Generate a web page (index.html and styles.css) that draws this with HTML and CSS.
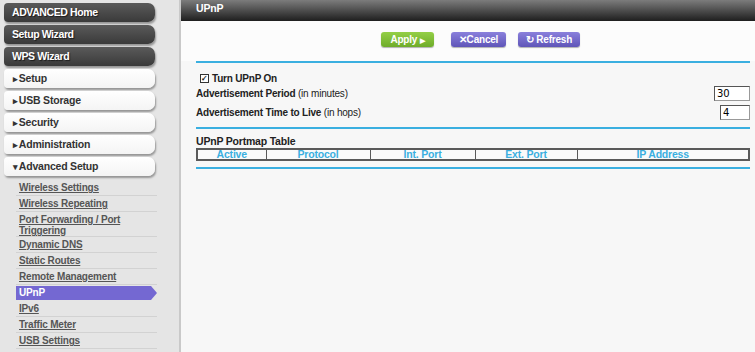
FILE: index.html
```html
<!DOCTYPE html>
<html lang="en">
<head>
  <meta charset="UTF-8">
  <title>UPnP</title>
  <link rel="stylesheet" href="styles.css">
</head>
<body>
  <div class="sidebar">
    <div class="nav-btn dark">ADVANCED Home</div>
    <div class="nav-btn dark">Setup Wizard</div>
    <div class="nav-btn dark">WPS Wizard</div>
    <div class="nav-btn light"><span class="tri">&#9656;</span>Setup</div>
    <div class="nav-btn light"><span class="tri">&#9656;</span>USB Storage</div>
    <div class="nav-btn light"><span class="tri">&#9656;</span>Security</div>
    <div class="nav-btn light"><span class="tri">&#9656;</span>Administration</div>
    <div class="nav-btn light"><span class="tri">&#9662;</span>Advanced Setup</div>
    <ul class="sub-links">
      <li><a>Wireless Settings</a></li>
      <li><a>Wireless Repeating</a></li>
      <li class="two"><a>Port Forwarding / Port Triggering</a></li>
      <li><a>Dynamic DNS</a></li>
      <li><a>Static Routes</a></li>
      <li><a>Remote Management</a></li>
      <li class="current"><a>UPnP</a></li>
      <li><a>IPv6</a></li>
      <li><a>Traffic Meter</a></li>
      <li><a>USB Settings</a></li>
    </ul>
  </div>

  <div class="main">
    <div class="page-title">UPnP</div>
    <div class="action-bar">
      <button class="btn green">Apply <span class="arrow">&#9654;</span></button>
      <button class="btn purple cancel"><span class="x">&#10005;</span>Cancel</button>
      <button class="btn purple refresh"><span class="spin">&#8635;</span> Refresh</button>
    </div>
    <div class="content">
      <div class="rule"></div>
      <div class="form">
        <label class="check-row"><span class="box">&#10003;</span>Turn UPnP On</label>
        <div class="field-row">
          <span><b>Advertisement Period</b> (in minutes)</span>
          <input type="text" class="num wide" value="30">
        </div>
        <div class="field-row">
          <span><b>Advertisement Time to Live</b> (in hops)</span>
          <input type="text" class="num" value="4">
        </div>
      </div>
      <div class="rule"></div>
      <h4 class="table-title">UPnP Portmap Table</h4>
      <table class="portmap">
        <tr>
          <th class="c-active">Active</th>
          <th class="c-proto">Protocol</th>
          <th class="c-int">Int. Port</th>
          <th class="c-ext">Ext. Port</th>
          <th>IP Address</th>
        </tr>
      </table>
      <div class="rule bottom"></div>
    </div>
  </div>
</body>
</html>
```

FILE: styles.css
```css
:root {
  --blue: #3aafe0;
  --purple: #7468d2;
  --sidebar-bg: #e5e5e5;
  --font: "Liberation Sans", Arial, sans-serif;
}
* { box-sizing: border-box; margin: 0; padding: 0; }
html, body { height: 100%; }
body {
  display: flex;
  font-family: var(--font);
  font-size: 10px;
  letter-spacing: -0.2px;
  color: #222;
  background: #f7f7f7;
  overflow: hidden;
}

/* Sidebar */
.sidebar {
  width: 181px;
  flex: none;
  background: var(--sidebar-bg);
  border-right: 2px solid #c9c9c9;
  padding: 3px 0 0 4px;
  display: flex;
  flex-direction: column;
  gap: 3px;
}
.nav-btn {
  width: 151px;
  height: 19px;
  line-height: 19px;
  border-radius: 4px 7px 7px 4px;
  font-weight: bold;
  font-size: 10.5px;
  box-shadow: 1px 2px 2px rgba(0,0,0,0.35);
}
.nav-btn.dark {
  background: linear-gradient(#5a5a5a, #3a3a3a);
  color: #fff;
  padding-left: 8px;
  letter-spacing: -0.4px;
  text-shadow: 1px 1px 1px rgba(0,0,0,0.6);
}
.nav-btn.light {
  background: linear-gradient(#fff, #f4f4f4);
  color: #333;
  padding-left: 9px;
}
.nav-btn .tri { font-size: 9px; margin-right: 1px; }

.sub-links {
  list-style: none;
  margin: 1px 0 0 12px;
  width: 141px;
}
.sub-links li {
  padding: 2px 0 2px 3px;
  line-height: 11px;
  border-bottom: 1px solid #d2d2d2;
}
.sub-links li.two { padding-bottom: 0; }
.sub-links a {
  color: #555;
  font-weight: bold;
  text-decoration: underline;
}
.sub-links li.current {
  background: var(--purple);
  clip-path: polygon(0 1px, 135px 1px, 141px 50%, 135px calc(100% - 1px), 0 calc(100% - 1px));
  border-bottom-color: transparent;
}
.sub-links li.current a { color: #fff; text-decoration: none; }

/* Main */
.main { flex: 1; display: flex; flex-direction: column; }
.page-title {
  height: 21px;
  line-height: 17px;
  padding-left: 15px;
  color: #fff;
  font-size: 10.5px;
  font-weight: bold;
  background: linear-gradient(#7c7c7c, #1e1e1e);
}
.action-bar {
  display: flex;
  padding: 11px 0 0 200px;
  height: 40px;
  background: #fcfcfc;
}
.btn {
  height: 15px;
  border: none;
  border-radius: 3px;
  color: #fff;
  font-family: var(--font);
  font-weight: bold;
  font-size: 10px;
  letter-spacing: -0.2px;
  box-shadow: 0 1px 1px rgba(0,0,0,0.3);
}
.btn.green { width: 53px; background: linear-gradient(#94cf46, #6eac2a); margin-right: 17px; }
.btn.purple { background: linear-gradient(#8a80dc, #5f55b8); }
.btn.cancel { width: 55px; margin-right: 12px; }
.btn.refresh { width: 62px; }
.btn .arrow { font-size: 7px; }
.btn .x { font-size: 10px; }
.btn .spin { font-size: 10px; }

.content { padding: 0 5px 0 15px; }
.rule { height: 2px; background: var(--blue); }
.form { padding: 8px 0 6px 4px; }
.check-row {
  display: flex;
  align-items: center;
  gap: 3px;
  font-weight: bold;
  height: 14px;
}
.check-row .box {
  width: 9px;
  height: 9px;
  border: 1px solid #333;
  background: #fff;
  font-size: 8px;
  line-height: 7px;
  text-align: center;
}
.field-row {
  display: flex;
  justify-content: space-between;
  align-items: center;
  height: 17px;
  margin-left: -4px;
}
.field-row + .field-row { height: 19px; padding-top: 2px; }
.num {
  width: 30px;
  height: 15px;
  border: 1px solid #999;
  border-top-color: #555;
  border-left-color: #555;
  background: #fff;
  font-family: "DejaVu Sans", sans-serif;
  font-size: 10px;
  padding-left: 2px;
}
.num.wide { width: 36px; }
.table-title { font-size: 10.5px; line-height: 12px; padding: 6px 0 1px 0; }
.portmap {
  width: 100%;
  border-collapse: collapse;
  border: 2px solid #5a5a5a;
}
.portmap th {
  border: 1px solid #5a5a5a;
  height: 11px;
  line-height: 9px;
  color: var(--blue);
  font-size: 10.5px;
  font-weight: bold;
  background: #fafafa;
}
.c-active { width: 69px; }
.c-proto { width: 104px; }
.c-int { width: 105px; }
.c-ext { width: 102px; }
.rule.bottom { margin-top: 6px; }
```
